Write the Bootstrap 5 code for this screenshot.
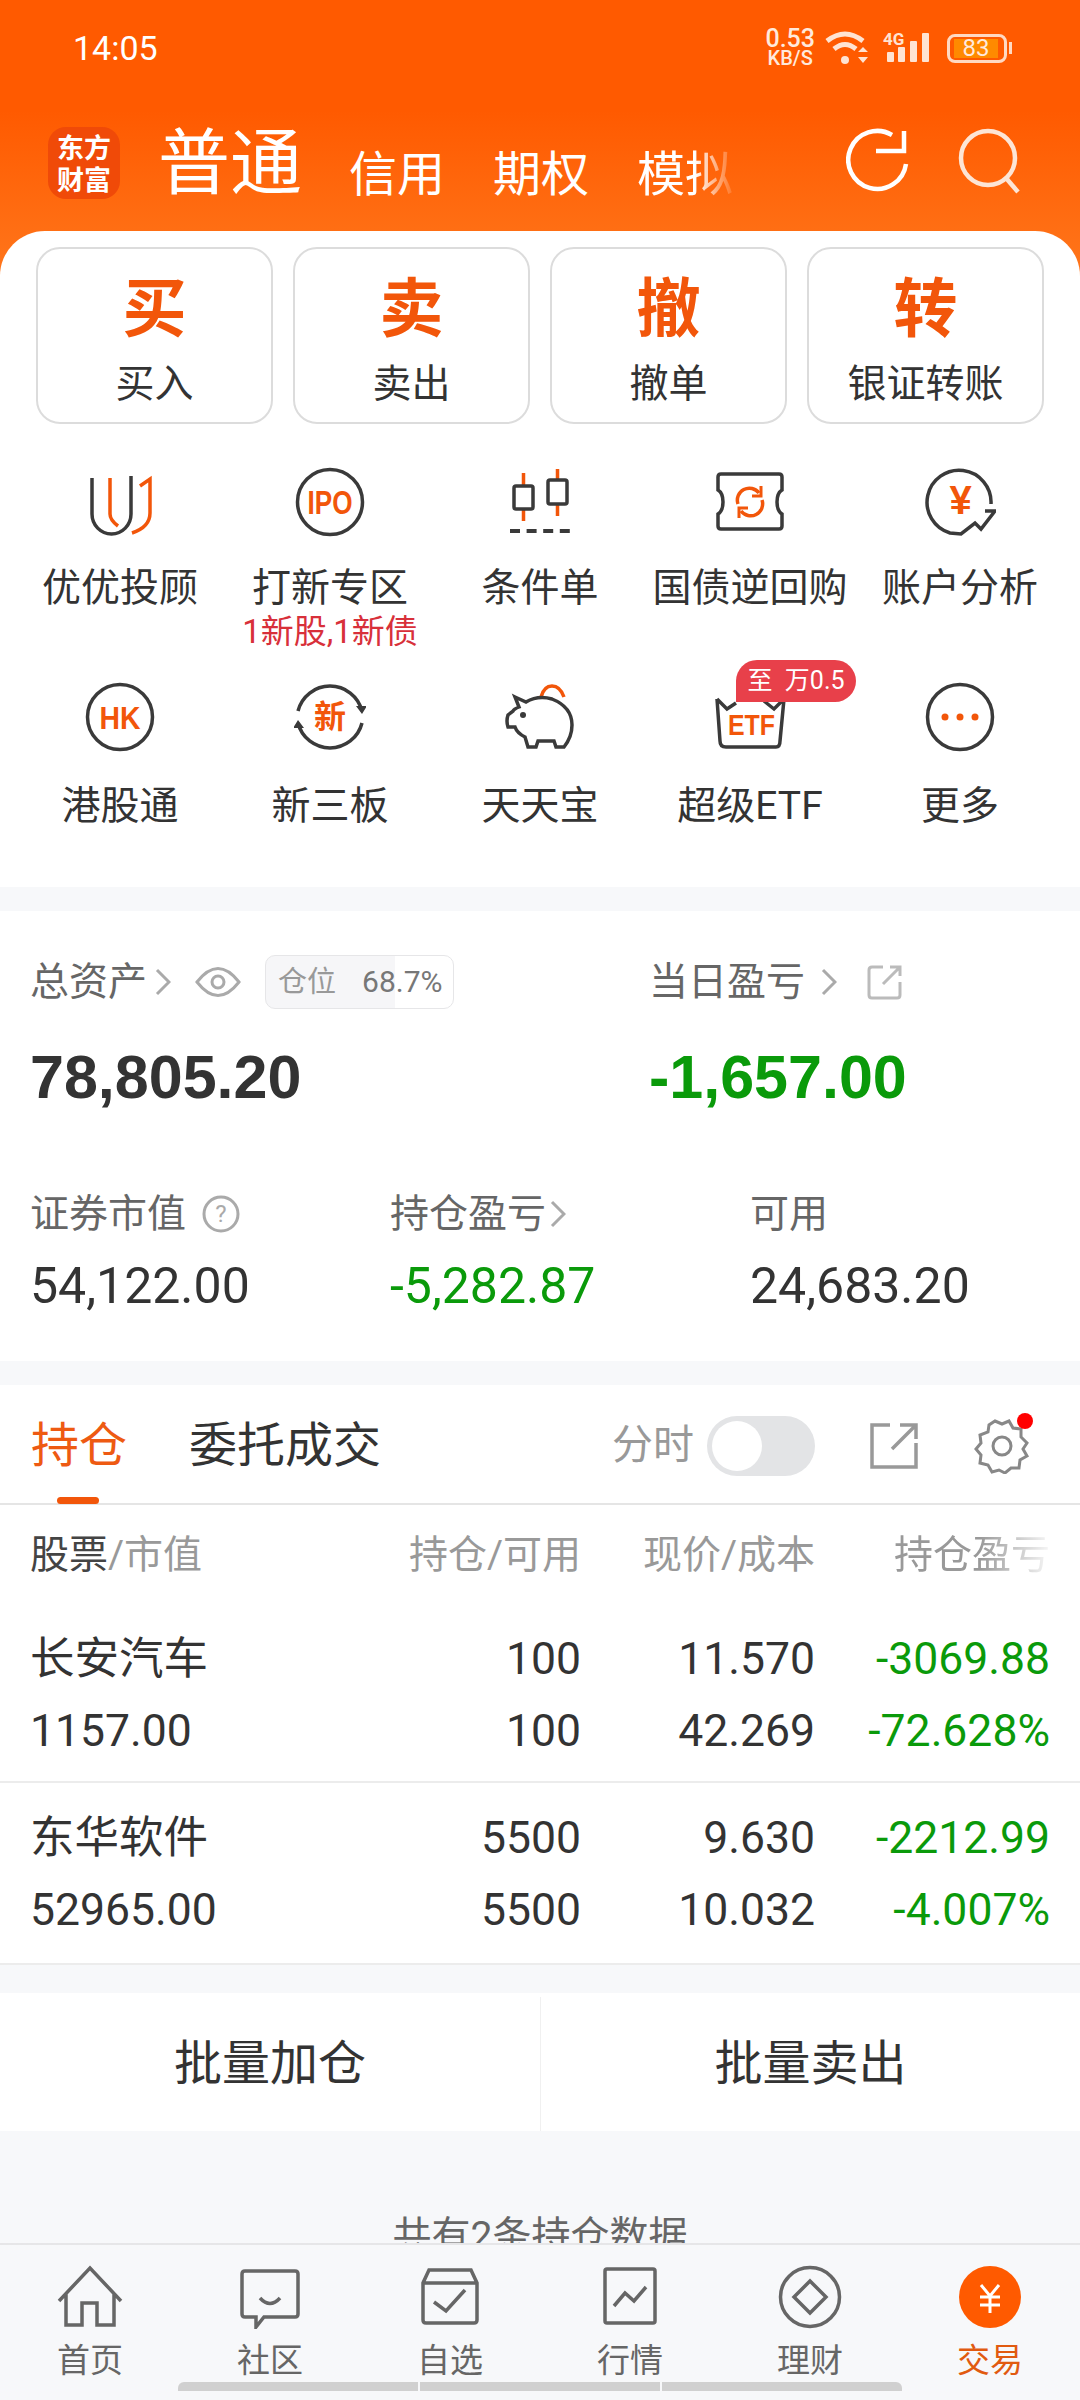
<!DOCTYPE html>
<html lang="zh-CN">
<head>
<meta charset="UTF-8" />
<meta name="viewport" content="width=device-width, initial-scale=1.0" />
<title>交易</title>
<link href="https://cdn.jsdelivr.net/npm/bootstrap@5.3.3/dist/css/bootstrap.min.css" rel="stylesheet" />
<style>
  body { margin: 0; background: #f7f8fa; font-family: Roboto, "Noto Sans CJK SC", sans-serif; color: #333; }
  svg { display: block; }
  .phone { width: 1080px; height: 2400px; overflow: hidden; }
  .scroller { height: 2243px; overflow: hidden; }

  .top-wrap { background: linear-gradient(180deg, #ff5a00 0, #ff5a00 110px, #ff7a1f 300px) no-repeat; background-size: 100% 300px; background-color: #fff; }
  .status-bar { height: 96px; padding: 0 68px 0 73px; color: #fff; }
  .status-time { font-size: 34px; }
  .net-speed { font-size: 25px; line-height: 21px; font-weight: 500; text-align: center; color: #ffe9dc; margin-right: 10px; }
  .net-speed small { display: block; font-size: 20px; line-height: 19px; }
  .batt-box { width: 60px; height: 29px; border: 3px solid #ffd9c2; border-radius: 8px; padding: 2px 4px; }
  .batt-fill { display: block; width: 44px; height: 19px; background: #ff8a00; color: #ffe9dc; font-size: 24px; line-height: 19px; text-align: center; }
  .batt-tip { width: 3px; height: 12px; background: #ffd9c2; margin-left: 2px; }
  .cell-tag { font-size: 17px; font-weight: 700; line-height: 15px; color: #ffe3d2; position: absolute; left: 0; top: 0; }
  .cell-wrap { position: relative; width: 48px; height: 32px; margin-left: 14px; margin-right: 16px; }
  .head-nav { height: 135px; padding: 0 0 0 48px; color: #fff; }
  .app-logo { width: 72px; height: 72px; border-radius: 18px; background: #f04a08; color: #fff; font-family: "Noto Sans CJK SC", serif; font-weight: 700; font-size: 27px; line-height: 32px; text-align: center; padding-top: 4px; margin-right: 38px; margin-top: -2px; }
  .nav-main { font-size: 72px; line-height: 80px; width: 191px; margin-top: 0; }
  .nav-sub { font-size: 48px; line-height: 60px; margin-top: 22px; }
  .nav-sub + .nav-sub { margin-left: 48px; }
  .nav-fade { -webkit-mask-image: linear-gradient(90deg, #000 60%, rgba(0,0,0,.1) 100%); mask-image: linear-gradient(90deg, #000 60%, rgba(0,0,0,.1) 100%); }
  .head-icons { margin-left: auto; padding-right: 58px; gap: 48px; margin-top: -6px; }

  .sheet { background: #fff; border-radius: 45px 45px 0 0; padding: 16px 36px 0; height: 656px; }
  .action-tile { width: 237px; height: 177px; border: 2px solid #dcdcdc; border-radius: 24px; padding: 0; background: #fff; color: #333; }
  .action-big { display: block; font-size: 64px; font-weight: 700; line-height: 72px; color: #f2560a; padding-top: 10px; }
  .action-text { display: block; font-size: 39px; line-height: 46px; margin-top: 15px; }
  .quick-grid { margin: 42px -21px 0; }
  .quick-cell { width: 210px; height: 215px; position: relative; text-align: center; }
  .quick-cell.low { height: 156px; }
  .quick-cell svg { margin: 0 auto; }
  .quick-name { font-size: 39px; line-height: 46px; margin-top: 27px; white-space: nowrap; }
  .quick-cell.low .quick-name { margin-top: 30px; }
  .quick-note { font-size: 33px; line-height: 36px; color: #d8303a; margin-top: 3px; white-space: nowrap; }
  .rate-tag { position: absolute; left: 91px; top: -21px; width: 120px; height: 42px; background: #e8404a; color: #fff; border-radius: 21px 21px 21px 0; font-size: 25px; line-height: 42px; white-space: pre; }
  .ico-text { font-family: "Liberation Sans", "Noto Sans CJK SC", sans-serif; font-weight: 700; fill: #f2560a; text-anchor: middle; }

  .gap-bar { height: 24px; }
  .asset-card { background: #fff; height: 450px; padding-left: 30px; }
  .asset-top { height: 142px; padding-top: 44px; }
  .asset-half { width: 619px; flex-shrink: 0; }
  .asset-label { font-size: 39px; line-height: 54px; color: #666; white-space: nowrap; }
  .asset-big { font-size: 61px; line-height: 76px; font-weight: 700; margin-top: 30px; font-family: "Liberation Sans", sans-serif; }
  .pos-chip { position: relative; width: 189px; height: 54px; border: 1px solid #e6e6e8; border-radius: 10px; margin-left: 24px; font-size: 29px; line-height: 52px; color: #999; padding-left: 12px; background: linear-gradient(90deg, #f6f6f8 69%, #fff 69%); overflow: hidden; flex-shrink: 0; }
  .pos-chip b { font-weight: 400; color: #777; margin-left: 26px; font-size: 30px; }
  .asset-lower { margin-top: 134px; }
  .asset-third { width: 360px; flex-shrink: 0; }
  .asset-num { font-size: 50px; line-height: 60px; margin-top: 15px; }
  .asset-share { margin-left: 30px; }
  .txt-green { color: #0a9a0a; }

  .hold-card { background: #fff; height: 578px; }
  .hold-tabs { height: 120px; padding: 4px 50px 0 31px; border-bottom: 2px solid #e5e5e5; position: relative; }
  .hold-tab { font-size: 48px; line-height: 60px; margin-right: 62px; }
  .hold-tab.on { color: #ee5a12; }
  .tab-line { position: absolute; left: 57px; bottom: -1px; width: 42px; height: 7px; border-radius: 4px; background: #f2560a; }
  .min-label { font-size: 41px; color: #999; margin-right: 13px; }
  .min-switch { width: 108px; height: 60px; border-radius: 30px; background: #e3e4e6; padding: 5px; margin-right: 55px; }
  .min-switch i { display: block; width: 50px; height: 50px; border-radius: 50%; background: #fff; }
  .min-share { margin-right: 56px; }
  .red-dot { position: absolute; right: -3px; top: -5px; width: 16px; height: 16px; border-radius: 50%; background: #f00; }
  .hold-row { padding: 0 30px 0 30px; }
  .col-name { width: 370px; }
  .col-qty { width: 181px; }
  .col-price { width: 234px; }
  .col-gain { width: 235px; }
  .hold-head { height: 100px; font-size: 39px; color: #999; white-space: nowrap; }
  .hold-head b { font-weight: 400; color: #444; }
  .gain-fade { -webkit-mask-image: linear-gradient(90deg, #000 55%, rgba(0,0,0,.08) 100%); mask-image: linear-gradient(90deg, #000 55%, rgba(0,0,0,.08) 100%); }
  .stock-item { height: 178px; padding-top: 18px; }
  .stock-item + .stock-item { height: 182px; padding-top: 19px; }
  .stock-line { font-size: 44.5px; line-height: 72px; white-space: nowrap; }
  .row-line { border-bottom: 2px solid #ececec; }

  .batch-bar { background: #fff; height: 138px; margin-top: 30px; padding-top: 4px; }
  .batch-btn { width: 540px; font-size: 48px; color: #333; }
  .batch-btn + .batch-btn { border-left: 1px solid #f0f0f0; }
  .count-note { font-size: 39px; color: #666; text-align: center; margin-top: 80px; line-height: 50px; }

  .tab-bar { height: 157px; background: #f7f8fa; border-top: 2px solid #e6e6e8; }
  .tab-cell { width: 180px; padding-top: 20px; text-align: center; color: #666; }
  .tab-cell svg { margin: 0 auto; }
  .tab-name { font-size: 33px; line-height: 40px; margin-top: 12px; }
  .tab-cell.on { color: #e15a10; }
  .home-bar { gap: 2px; margin-top: 1px; }
  .home-bar i { display: block; width: 240px; height: 9px; background: #d0d0d0; }
  .home-bar i:first-child { border-radius: 6px 0 0 0; }
  .home-bar i:last-child { border-radius: 0 6px 0 0; }
</style>
</head>
<body>
<div class="phone">
  <div class="scroller">
    <div class="top-wrap">
      <div class="status-bar d-flex align-items-center justify-content-between">
        <span class="status-time">14:05</span>
        <div class="d-flex align-items-center">
          <div class="net-speed">0.53<small>KB/S</small></div>
          <svg width="44" height="36" viewBox="0 0 44 36" fill="none" stroke="#ffe3d2" stroke-width="5">
            <path d="M2 11Q20 -3 38 11M9 19Q20 10 31 19"/>
            <circle cx="20" cy="30" r="4" fill="#ffe3d2" stroke="none"/>
            <path d="M33 22l5-5 5 5zM33 27h10l-5 6z" fill="#ffe3d2" stroke="none"/>
          </svg>
          <div class="cell-wrap">
            <span class="cell-tag">4G</span>
            <svg width="48" height="32" viewBox="0 0 48 32" fill="#ffe3d2">
              <rect x="4" y="20" width="7" height="10" rx="1"/><rect x="15" y="15" width="7" height="15" rx="1"/><rect x="27" y="9" width="7" height="21" rx="1"/><rect x="39" y="1" width="7" height="29" rx="1"/>
            </svg>
          </div>
          <div class="d-flex align-items-center">
            <div class="batt-box"><span class="batt-fill">83</span></div>
            <div class="batt-tip"></div>
          </div>
        </div>
      </div>
      <div class="head-nav d-flex align-items-center">
        <div class="app-logo">东方<br>财富</div>
        <div class="nav-main">普通</div>
        <div class="nav-sub">信用</div>
        <div class="nav-sub">期权</div>
        <div class="nav-sub nav-fade">模拟</div>
        <div class="head-icons d-flex align-items-center">
          <svg width="64" height="66" viewBox="0 0 64 66" fill="none" stroke="#fff" stroke-width="4.5">
            <path d="M46 7A29 29 0 1 0 60 36"/><path d="M58 3V23H30"/>
          </svg>
          <svg width="64" height="66" viewBox="0 0 64 66" fill="none" stroke="#fde5d5" stroke-width="4.5">
            <circle cx="30" cy="30" r="27"/><path d="M48 50L60 64"/>
          </svg>
        </div>
      </div>

      <div class="sheet">
        <div class="d-flex justify-content-between">
          <button type="button" class="btn action-tile"><span class="action-big">买</span><span class="action-text">买入</span></button>
          <button type="button" class="btn action-tile"><span class="action-big">卖</span><span class="action-text">卖出</span></button>
          <button type="button" class="btn action-tile"><span class="action-big">撤</span><span class="action-text">撤单</span></button>
          <button type="button" class="btn action-tile"><span class="action-big">转</span><span class="action-text">银证转账</span></button>
        </div>

        <div class="quick-grid d-flex flex-wrap">
          <div class="quick-cell">
            <svg width="72" height="72" viewBox="0 0 72 72" fill="none" stroke-width="3.5">
              <path d="M8 12V48a19.5 20 0 0 0 39 0V10" stroke="#3a3a3a"/>
              <path d="M26 12V48q0 6 8 12M48 67q18-6 18-20V13l-10 7" stroke="#f2560a"/>
            </svg>
            <div class="quick-name">优优投顾</div>
          </div>
          <div class="quick-cell">
            <svg width="72" height="72" viewBox="0 0 72 72" fill="none">
              <circle cx="36" cy="36" r="32.5" stroke="#3a3a3a" stroke-width="3.5"/>
              <text class="ico-text" x="36" y="48" font-size="33" textLength="45" lengthAdjust="spacingAndGlyphs">IPO</text>
            </svg>
            <div class="quick-name">打新专区</div>
            <div class="quick-note">1新股,1新债</div>
          </div>
          <div class="quick-cell">
            <svg width="72" height="72" viewBox="0 0 72 72" fill="none" stroke-width="3.5">
              <path d="M19.5 7V55M53.5 3V50" stroke="#f2560a"/>
              <rect x="10" y="20" width="19" height="23" rx="2" fill="#fff" stroke="#3a3a3a"/>
              <rect x="44" y="14" width="19" height="24" rx="2" fill="#fff" stroke="#3a3a3a"/>
              <path d="M6 65H66" stroke="#3a3a3a" stroke-width="4" stroke-dasharray="10 6.6"/>
            </svg>
            <div class="quick-name">条件单</div>
          </div>
          <div class="quick-cell">
            <svg width="72" height="72" viewBox="0 0 72 72" fill="none" stroke-width="3.5">
              <path d="M7 8H65q3 0 3 3V24q-5 3-5 12 0 9 5 12V60q0 3-3 3H7q-3 0-3-3V48q5-3 5-12 0-9-5-12V11q0-3 3-3z" stroke="#3a3a3a"/>
              <path d="M24 38A12 12 0 0 1 45 27M48 34A12 12 0 0 1 27 45" stroke="#f2560a"/>
              <path d="M47 20V30H38M25 52V42H34" stroke="#f2560a" stroke-width="3"/>
            </svg>
            <div class="quick-name">国债逆回购</div>
          </div>
          <div class="quick-cell">
            <svg width="72" height="72" viewBox="0 0 72 72" fill="none">
              <path d="M67 38A32 32 0 1 0 26 67L37 68L51 57L57 63L71 45H61" stroke="#3a3a3a" stroke-width="3.5"/>
              <text class="ico-text" x="36.5" y="48" font-size="40">¥</text>
            </svg>
            <div class="quick-name">账户分析</div>
          </div>

          <div class="quick-cell low">
            <svg width="72" height="72" viewBox="0 0 72 72" fill="none">
              <circle cx="36" cy="36" r="32.5" stroke="#3a3a3a" stroke-width="3.5"/>
              <text class="ico-text" x="36" y="48" font-size="32" textLength="41" lengthAdjust="spacingAndGlyphs">HK</text>
            </svg>
            <div class="quick-name">港股通</div>
          </div>
          <div class="quick-cell low">
            <svg width="72" height="72" viewBox="0 0 72 72" fill="none" stroke="#3a3a3a" stroke-width="3.5">
              <path d="M4 30A33 33 0 0 1 68 30M68 42A33 33 0 0 1 4 42"/>
              <path d="M62 25l6 8 5-8zM10 47l-6-8-5 8z" fill="#3a3a3a" stroke="none"/>
              <text class="ico-text" x="36" y="47" font-size="32" stroke="none" style="font-family: 'Noto Sans CJK SC', sans-serif">新</text>
            </svg>
            <div class="quick-name">新三板</div>
          </div>
          <div class="quick-cell low">
            <svg width="72" height="72" viewBox="0 0 72 72" fill="none" stroke-width="3.5">
              <path d="M37 16Q40 5 48 5T60 16" stroke="#f2560a"/>
              <path d="M11 16L22 21Q34 14 48 18Q68 26 68 44Q68 56 60 66H52L50 60H34L32 66H24L21 56Q13 52 11 46H4Q2 40 4 34L9 30Q10 28 15 26Z" stroke="#3a3a3a"/>
              <circle cx="19" cy="34" r="3" fill="#3a3a3a"/>
            </svg>
            <div class="quick-name">天天宝</div>
          </div>
          <div class="quick-cell low">
            <svg width="72" height="72" viewBox="0 0 72 72" fill="none">
              <path d="M3 18L6 60Q6 66 12 66H62Q66 66 66 60L70 18L60 28L50 20M3 18L13 28L22 22" stroke="#3a3a3a" stroke-width="3.5"/>
              <text class="ico-text" x="37.5" y="54" font-size="30" textLength="47" lengthAdjust="spacingAndGlyphs">ETF</text>
            </svg>
            <div class="rate-tag">至  万0.5</div>
            <div class="quick-name">超级ETF</div>
          </div>
          <div class="quick-cell low">
            <svg width="72" height="72" viewBox="0 0 72 72" fill="none">
              <circle cx="36" cy="36" r="32.5" stroke="#3a3a3a" stroke-width="3.5"/>
              <circle cx="21" cy="36" r="3.5" fill="#f2560a"/><circle cx="36" cy="36" r="3.5" fill="#f2560a"/><circle cx="51" cy="36" r="3.5" fill="#f2560a"/>
            </svg>
            <div class="quick-name">更多</div>
          </div>
        </div>
      </div>
    </div>

    <div class="gap-bar"></div>

    <div class="asset-card">
      <div class="asset-top d-flex">
        <div class="asset-half">
          <div class="asset-label d-flex align-items-center">总资产
            <svg class="ms-2" width="16" height="30" viewBox="0 0 16 30" fill="none" stroke="#aaa" stroke-width="3"><path d="M2 3L14 15L2 27"/></svg>
            <svg class="ms-4" width="46" height="34" viewBox="0 0 46 34" fill="none" stroke="#aaa" stroke-width="3"><path d="M2 17Q23 -10 44 17Q23 44 2 17Z"/><circle cx="23" cy="17" r="6"/></svg>
            <div class="pos-chip">仓位<b>68.7%</b></div>
          </div>
          <div class="asset-big">78,805.20</div>
        </div>
        <div>
          <div class="asset-label d-flex align-items-center">当日盈亏
            <svg class="ms-3" width="16" height="30" viewBox="0 0 16 30" fill="none" stroke="#aaa" stroke-width="3"><path d="M2 3L14 15L2 27"/></svg>
            <svg class="asset-share" width="36" height="36" viewBox="0 0 36 36" fill="none" stroke="#bbb" stroke-width="3"><path d="M16 3H5Q2 3 2 6V31Q2 34 5 34H30Q33 34 33 31V18M16 20L33 3M23 3H33V12"/></svg>
          </div>
          <div class="asset-big txt-green">-1,657.00</div>
        </div>
      </div>
      <div class="asset-lower d-flex">
        <div class="asset-third">
          <div class="asset-label d-flex align-items-center">证券市值
            <svg class="ms-3" width="38" height="38" viewBox="0 0 38 38" fill="none"><circle cx="19" cy="19" r="17" stroke="#aaa" stroke-width="3"/><text x="19" y="27" font-size="24" fill="#aaa" text-anchor="middle" font-family="Roboto, sans-serif">?</text></svg>
          </div>
          <div class="asset-num">54,122.00</div>
        </div>
        <div class="asset-third">
          <div class="asset-label d-flex align-items-center">持仓盈亏
            <svg class="ms-1" width="16" height="30" viewBox="0 0 16 30" fill="none" stroke="#aaa" stroke-width="3"><path d="M2 3L14 15L2 27"/></svg>
          </div>
          <div class="asset-num txt-green">-5,282.87</div>
        </div>
        <div class="asset-third">
          <div class="asset-label">可用</div>
          <div class="asset-num">24,683.20</div>
        </div>
      </div>
    </div>

    <div class="gap-bar"></div>

    <div class="hold-card">
      <div class="hold-tabs d-flex align-items-center">
        <div class="hold-tab on">持仓</div>
        <div class="hold-tab">委托成交</div>
        <div class="tab-line"></div>
        <div class="ms-auto d-flex align-items-center">
          <span class="min-label">分时</span>
          <div class="min-switch"><i></i></div>
          <svg class="min-share" width="48" height="46" viewBox="0 0 48 46" fill="none" stroke="#999" stroke-width="3.5"><path d="M20 2H2V44H46V20M22 26L46 2M30 2H46V16"/></svg>
          <div class="position-relative">
            <svg width="56" height="56" viewBox="0 0 56 56" fill="none" stroke="#888" stroke-width="3"><path d="M21 3L28 6L35 3L39 10L47 11L47 19L53 25L49 31L53 38L46 42L45 50L37 50L31 55L25 52L18 54L14 47L6 45L7 37L2 31L7 25L6 17L14 14L15 7Z"/><circle cx="28" cy="28" r="9"/></svg>
            <div class="red-dot"></div>
          </div>
        </div>
      </div>

      <div class="hold-head hold-row d-flex align-items-center">
        <div class="col-name"><b>股票</b>/市值</div>
        <div class="col-qty text-end">持仓/可用</div>
        <div class="col-price text-end">现价/成本</div>
        <div class="col-gain text-end"><span class="gain-fade d-inline-block">持仓盈亏</span></div>
      </div>

      <div class="stock-item row-line">
        <div class="stock-line hold-row d-flex">
          <div class="col-name">长安汽车</div><div class="col-qty text-end">100</div><div class="col-price text-end">11.570</div><div class="col-gain text-end txt-green">-3069.88</div>
        </div>
        <div class="stock-line hold-row d-flex">
          <div class="col-name">1157.00</div><div class="col-qty text-end">100</div><div class="col-price text-end">42.269</div><div class="col-gain text-end txt-green">-72.628%</div>
        </div>
      </div>
      <div class="stock-item row-line">
        <div class="stock-line hold-row d-flex">
          <div class="col-name">东华软件</div><div class="col-qty text-end">5500</div><div class="col-price text-end">9.630</div><div class="col-gain text-end txt-green">-2212.99</div>
        </div>
        <div class="stock-line hold-row d-flex">
          <div class="col-name">52965.00</div><div class="col-qty text-end">5500</div><div class="col-price text-end">10.032</div><div class="col-gain text-end txt-green">-4.007%</div>
        </div>
      </div>
    </div>

    <div class="batch-bar d-flex">
      <div class="batch-btn d-flex align-items-center justify-content-center">批量加仓</div>
      <div class="batch-btn d-flex align-items-center justify-content-center">批量卖出</div>
    </div>
    <div class="count-note">共有2条持仓数据</div>
  </div>

  <div class="tab-bar">
    <div class="d-flex">
      <div class="tab-cell">
        <svg width="72" height="64" viewBox="0 0 72 64" fill="none" stroke="#666" stroke-width="3.5"><path d="M5 36L36 3L67 36M12 28V60H28V38H43V60H60V28"/></svg>
        <div class="tab-name">首页</div>
      </div>
      <div class="tab-cell">
        <svg width="72" height="64" viewBox="0 0 72 64" fill="none" stroke="#666" stroke-width="3.5"><path d="M11 6H61Q64 6 64 9V49Q64 52 61 52H30L22 62V52H11Q8 52 8 49V9Q8 6 11 6ZM26 33Q36 44 46 33"/></svg>
        <div class="tab-name">社区</div>
      </div>
      <div class="tab-cell">
        <svg width="72" height="64" viewBox="0 0 72 64" fill="none" stroke="#666" stroke-width="3.5"><path d="M15 5H57L63 18V55Q63 58 60 58H12Q9 58 9 55V18ZM9 18H63M20 37L32 46L51 25"/></svg>
        <div class="tab-name">自选</div>
      </div>
      <div class="tab-cell">
        <svg width="72" height="64" viewBox="0 0 72 64" fill="none" stroke="#666" stroke-width="3.5"><path d="M13 4H59Q61 4 61 6V56Q61 58 59 58H13Q11 58 11 56V6Q11 4 13 4ZM20 41L31 28L40 36L52 22"/></svg>
        <div class="tab-name">行情</div>
      </div>
      <div class="tab-cell">
        <svg width="72" height="64" viewBox="0 0 72 64" fill="none" stroke="#666" stroke-width="3.5"><circle cx="36" cy="32" r="29.5"/><path d="M36 16L52 32L36 48L20 32Z"/></svg>
        <div class="tab-name">理财</div>
      </div>
      <div class="tab-cell on">
        <svg width="72" height="64" viewBox="0 0 72 64" fill="none"><circle cx="36" cy="32" r="31" fill="#ff5a00"/><path d="M27 20L36 31L45 20M36 31V48M26 32H46M26 40H46" stroke="#fff" stroke-width="3"/></svg>
        <div class="tab-name">交易</div>
      </div>
    </div>
    <div class="home-bar d-flex justify-content-center"><i></i><i></i><i></i></div>
  </div>
</div>
<script src="https://cdn.jsdelivr.net/npm/bootstrap@5.3.3/dist/js/bootstrap.bundle.min.js"></script>
</body>
</html>
